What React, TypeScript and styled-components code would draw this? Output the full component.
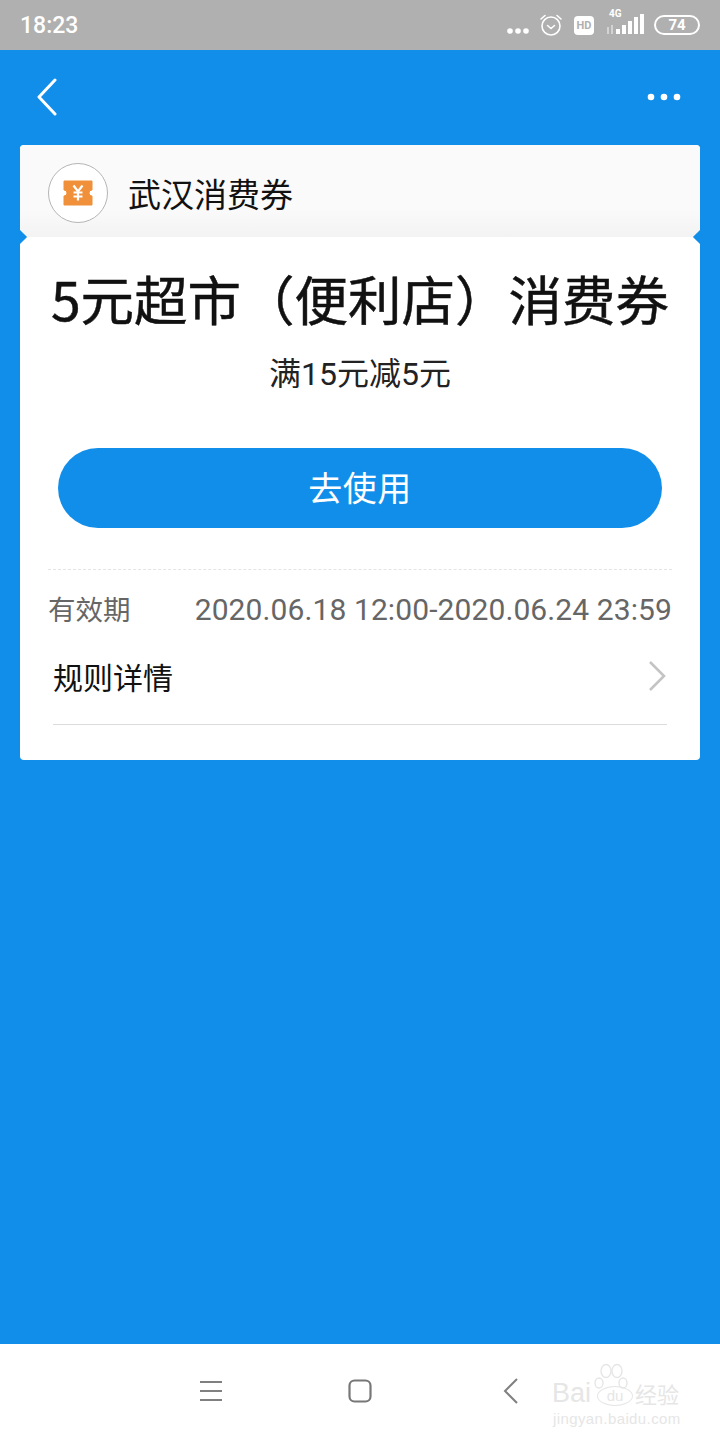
import React from 'react';
import styled, { createGlobalStyle } from 'styled-components';

const GlobalStyle = createGlobalStyle`
  html, body {
    margin: 0;
    padding: 0;
  }
  body {
    font-family: "Roboto", "Noto Sans CJK SC", sans-serif;
  }
  * {
    box-sizing: border-box;
  }
`;

const App: React.FC = () => {
  return (
    <Page>
      <GlobalStyle />
      <StatusBar>
        <Clock>18:23</Clock>
        <StatusIcons>
          <DotsIcon width="24" height="8" viewBox="0 0 24 8">
            <circle cx="4" cy="4" r="2.8" fill="#fff" />
            <circle cx="12" cy="4" r="2.8" fill="#fff" />
            <circle cx="20" cy="4" r="2.8" fill="#fff" />
          </DotsIcon>
          <svg width="24" height="24" viewBox="0 0 24 24" fill="none" stroke="#fff" strokeWidth="1.6" strokeLinecap="round">
            <circle cx="12" cy="13" r="9" />
            <path d="M8.5 12.5l3.5 3 3.5-3" />
            <path d="M2 6l4-3.5M22 6l-4-3.5" />
          </svg>
          <HdBadge>HD</HdBadge>
          <SignalBox>
            <NetLabel>4G</NetLabel>
            <svg width="38" height="24" viewBox="0 0 38 24" fill="#fff">
              <rect x="1" y="14" width="2" height="7" opacity="0.45" />
              <rect x="5" y="12" width="2" height="9" opacity="0.45" />
              <rect x="10" y="16" width="4" height="5" />
              <rect x="16" y="12" width="4" height="9" />
              <rect x="22" y="8" width="4" height="13" />
              <rect x="28" y="4" width="4" height="17" />
              <rect x="34" y="1" width="4" height="20" />
            </svg>
          </SignalBox>
          <Battery>74</Battery>
        </StatusIcons>
      </StatusBar>

      <Main>
        <NavBar>
          <svg width="24" height="38" viewBox="0 0 24 38" fill="none" stroke="#fff" strokeWidth="3" strokeLinecap="round" strokeLinejoin="round">
            <path d="M20 2L4 19l16 17" />
          </svg>
          <svg width="36" height="10" viewBox="0 0 36 10" fill="#fff">
            <circle cx="5" cy="5" r="3.3" />
            <circle cx="18" cy="5" r="3.3" />
            <circle cx="31" cy="5" r="3.3" />
          </svg>
        </NavBar>

        <Card>
          <CardHeader>
            <LogoCircle>
              <svg width="30" height="26" viewBox="0 0 30 26">
                <path
                  d="M1 1h28v9a3 3 0 0 0 0 6v9H1v-9a3 3 0 0 0 0-6z"
                  fill="#f0903a"
                  stroke="#f0903a"
                  strokeLinejoin="round"
                />
                <path
                  d="M10.500 5.500l4.500 6 4.500-6M10.500 12.500h9M10.500 16.500h9M15 11.500v9"
                  fill="none"
                  stroke="#fff"
                  strokeWidth="2.200"
                />
              </svg>
            </LogoCircle>
            <Brand>武汉消费券</Brand>
          </CardHeader>
          <Notch side="left" />
          <Notch side="right" />

          <CardBody>
            <Title>5元超市（便利店）消费券</Title>
            <Subtitle>满15元减5元</Subtitle>
            <UseButton>去使用</UseButton>
            <DashedLine />
            <ValidRow>
              <ValidLabel>有效期</ValidLabel>
              <ValidDate>2020.06.18 12:00-2020.06.24 23:59</ValidDate>
            </ValidRow>
            <RulesRow>
              <RulesText>规则详情</RulesText>
              <svg width="20" height="32" viewBox="0 0 20 32" fill="none" stroke="#c4c4c4" strokeWidth="2.6">
                <path d="M3 2l14 14L3 30" />
              </svg>
            </RulesRow>
          </CardBody>
        </Card>
      </Main>

      <BottomBar>
        <BottomIcons>
          <svg width="24" height="22" viewBox="0 0 24 22" stroke="#808080" strokeWidth="2">
            <path d="M1 2h22M1 11h22M1 20h22" />
          </svg>
          <svg width="24" height="24" viewBox="0 0 24 24" fill="none" stroke="#777" strokeWidth="2.2">
            <rect x="1.500" y="1.500" width="21" height="21" rx="5" />
          </svg>
          <BackIcon width="16" height="26" viewBox="0 0 16 26" fill="none" stroke="#808080" strokeWidth="2">
            <path d="M14 1L2 13l12 12" />
          </BackIcon>
        </BottomIcons>
        <Watermark>
          <Paw width="34" height="30" viewBox="0 0 34 30" fill="none" stroke="#e6e6e6" strokeWidth="1.400">
            <ellipse cx="5" cy="20" rx="4" ry="5" />
            <ellipse cx="12" cy="8" rx="5" ry="6.500" />
            <ellipse cx="23" cy="8" rx="5" ry="6.500" />
            <ellipse cx="29" cy="20" rx="4" ry="5" />
          </Paw>
          <WatermarkLogo>
            Bai<DuBadge>du</DuBadge>
            <WatermarkCn>经验</WatermarkCn>
          </WatermarkLogo>
          <WatermarkUrl>jingyan.baidu.com</WatermarkUrl>
        </Watermark>
      </BottomBar>
    </Page>
  );
};

const Page = styled.div`
  width: 720px;
  height: 1440px;
  display: flex;
  flex-direction: column;
  background: #118eea;
  overflow: hidden;
`;

const StatusBar = styled.div`
  height: 50px;
  background: #b0b0b0;
  display: flex;
  align-items: center;
  justify-content: space-between;
  padding: 0 20px;
  color: #fff;
`;

const Clock = styled.span`
  font-size: 23px;
  font-weight: 500;
`;

const StatusIcons = styled.div`
  display: flex;
  align-items: center;
`;

const DotsIcon = styled.svg`
  margin: 11px 9px 0 0;
`;

const HdBadge = styled.span`
  width: 20px;
  height: 19px;
  margin-left: 11px;
  background: #fff;
  border-radius: 4px;
  color: #b0b0b0;
  font-size: 11px;
  font-weight: 700;
  text-align: center;
  line-height: 19px;
`;

const SignalBox = styled.div`
  position: relative;
  width: 38px;
  height: 24px;
  margin: 0 10px 0 12px;
`;

const NetLabel = styled.span`
  position: absolute;
  left: 3px;
  top: -5px;
  font-size: 10px;
  font-weight: 700;
  color: #fff;
`;

const Battery = styled.span`
  width: 46px;
  height: 20px;
  border: 2px solid #fff;
  border-radius: 10px;
  font-size: 15px;
  font-weight: 700;
  line-height: 16px;
  text-align: center;
  color: #fff;
`;

const Main = styled.main`
  flex: 1;
  display: flex;
  flex-direction: column;
  padding: 0 20px;
`;

const NavBar = styled.div`
  height: 95px;
  display: flex;
  align-items: center;
  justify-content: space-between;
  padding: 0 18px 2px 15px;
`;

const Card = styled.section`
  position: relative;
  height: 615px;
  background: #fff;
  border-radius: 4px;
  overflow: hidden;
`;

const CardHeader = styled.div`
  height: 92px;
  background: linear-gradient(#fafafa 70%, #f3f3f3);
  display: flex;
  align-items: center;
  padding: 4px 0 0 28px;
  gap: 20px;
`;

const LogoCircle = styled.div`
  width: 60px;
  height: 60px;
  border-radius: 50%;
  background: #fff;
  border: 1px solid #b5b5b5;
  display: flex;
  align-items: center;
  justify-content: center;
`;

const Brand = styled.h2`
  margin: 0;
  font-size: 33px;
  font-weight: 400;
  color: #111;
  font-family: "Noto Sans CJK SC", sans-serif;
  line-height: 1;
`;

const Notch = styled.span<{ side: 'left' | 'right' }>`
  position: absolute;
  top: 87px;
  ${(props) => (props.side === 'left' ? 'left: -5px;' : 'right: -5px;')}
  width: 10px;
  height: 10px;
  background: #118eea;
  transform: rotate(45deg);
`;

const CardBody = styled.div`
  display: flex;
  flex-direction: column;
  padding: 0 28px;
`;

const Title = styled.h1`
  margin: 30px -4px 0;
  font-size: 53.5px;
  line-height: 62px;
  font-weight: 400;
  -webkit-text-stroke: 0.5px #111;
  color: #111;
  text-align: center;
  white-space: nowrap;
  font-family: "Noto Sans CJK SC", sans-serif;
`;

const Subtitle = styled.p`
  margin: 25px 0 0;
  font-size: 32px;
  line-height: 40px;
  color: #222;
  text-align: center;
`;

const UseButton = styled.button`
  width: 604px;
  height: 80px;
  margin: 54px 0 0 10px;
  padding: 0 0 4px;
  border: 0;
  border-radius: 40px;
  background: #118eea;
  color: #fff;
  font-family: "Noto Sans CJK SC", sans-serif;
  font-size: 34px;
  letter-spacing: 0.5px;
`;

const DashedLine = styled.div`
  margin-top: 41px;
  border-top: 1px dashed #e4e4e4;
`;

const ValidRow = styled.div`
  margin-top: 19px;
  height: 40px;
  display: flex;
  align-items: center;
  justify-content: space-between;
  color: #666;
`;

const ValidLabel = styled.span`
  font-size: 27.5px;
  margin-top: -2px;
`;

const ValidDate = styled.span`
  font-size: 30px;
  letter-spacing: 0.1px;
  white-space: nowrap;
`;

const RulesRow = styled.div`
  margin: 8px 5px 0;
  height: 88px;
  display: flex;
  align-items: center;
  justify-content: space-between;
  border-bottom: 1px solid #dcdcdc;
  padding-bottom: 9px;
`;

const RulesText = styled.span`
  font-size: 30px;
  color: #111;
`;

const BottomBar = styled.footer`
  position: relative;
  height: 96px;
  background: #fff;
  display: flex;
  align-items: center;
  padding-left: 199px;
`;

const BottomIcons = styled.div`
  display: flex;
  align-items: center;
  gap: 125px;
  margin-top: -2px;
`;

const BackIcon = styled.svg`
  margin-left: 6px;
`;

const Watermark = styled.div`
  position: absolute;
  left: 540px;
  top: 16px;
  width: 140px;
  height: 70px;
  color: #e6e6e6;
`;

const Paw = styled.svg`
  position: absolute;
  left: 54px;
  top: 3px;
`;

const WatermarkLogo = styled.div`
  position: absolute;
  left: 12px;
  top: 18px;
  display: flex;
  align-items: center;
  font-family: "Liberation Sans", sans-serif;
  font-size: 27px;
  line-height: 30px;
  white-space: nowrap;
`;

const DuBadge = styled.span`
  width: 36px;
  height: 20px;
  margin: 5px 0 0 6px;
  border: 1px solid #e6e6e6;
  border-radius: 50%;
  font-size: 15px;
  line-height: 18px;
  text-align: center;
`;

const WatermarkCn = styled.span`
  margin-left: 2px;
  font-size: 22px;
  font-family: "Noto Sans CJK SC", sans-serif;
`;

const WatermarkUrl = styled.div`
  position: absolute;
  left: 13px;
  top: 50px;
  font-family: "Liberation Sans", sans-serif;
  font-size: 15px;
  letter-spacing: 0.4px;
  white-space: nowrap;
`;

export default App;
